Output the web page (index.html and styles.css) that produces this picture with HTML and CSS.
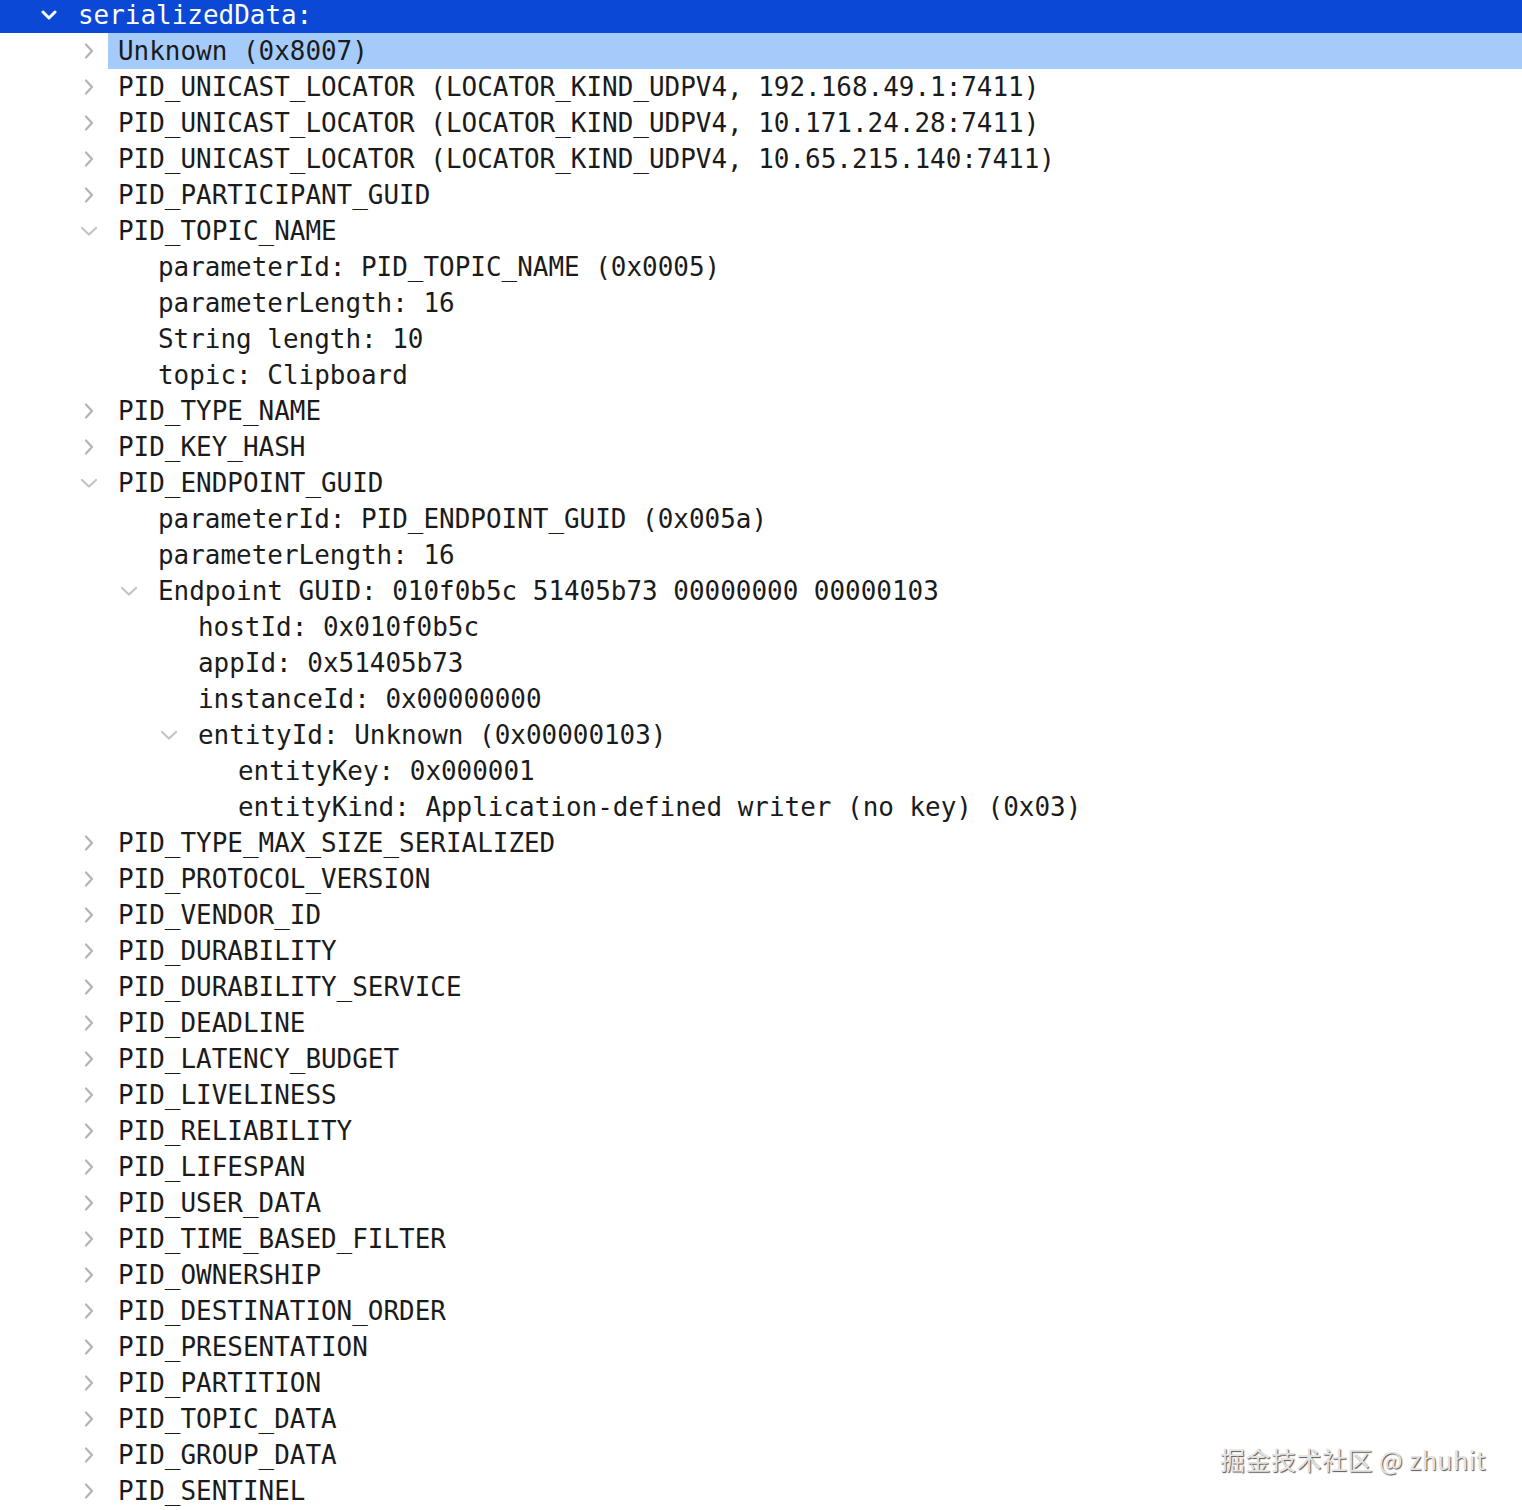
FILE: index.html
```html
<!DOCTYPE html>
<html lang="en">
<head>
    <meta charset="UTF-8">
    <meta name="viewport" content="width=device-width, initial-scale=1.0">
    <title>serializedData</title>
    <link rel="stylesheet" href="styles.css">
</head>
<body>
    <div class="tree">
        <div class="row l0 active">
            <span class="toggle"><svg class="open" width="16" height="10" viewBox="0 0 16 10"><path d="M2 2l6 6 6-6"/></svg></span>
            <span class="label">serializedData:</span>
        </div>
        <div class="row l1 selected">
            <span class="toggle"><svg class="closed" width="10" height="16" viewBox="0 0 10 16"><path d="M2 1.5l6 6.5-6 6.5"/></svg></span>
            <span class="label">Unknown (0x8007)</span>
        </div>
        <div class="row l1">
            <span class="toggle"><svg class="closed" width="10" height="16" viewBox="0 0 10 16"><path d="M2 1.5l6 6.5-6 6.5"/></svg></span>
            <span class="label">PID_UNICAST_LOCATOR (LOCATOR_KIND_UDPV4, 192.168.49.1:7411)</span>
        </div>
        <div class="row l1">
            <span class="toggle"><svg class="closed" width="10" height="16" viewBox="0 0 10 16"><path d="M2 1.5l6 6.5-6 6.5"/></svg></span>
            <span class="label">PID_UNICAST_LOCATOR (LOCATOR_KIND_UDPV4, 10.171.24.28:7411)</span>
        </div>
        <div class="row l1">
            <span class="toggle"><svg class="closed" width="10" height="16" viewBox="0 0 10 16"><path d="M2 1.5l6 6.5-6 6.5"/></svg></span>
            <span class="label">PID_UNICAST_LOCATOR (LOCATOR_KIND_UDPV4, 10.65.215.140:7411)</span>
        </div>
        <div class="row l1">
            <span class="toggle"><svg class="closed" width="10" height="16" viewBox="0 0 10 16"><path d="M2 1.5l6 6.5-6 6.5"/></svg></span>
            <span class="label">PID_PARTICIPANT_GUID</span>
        </div>
        <div class="row l1">
            <span class="toggle"><svg class="open grey" width="18" height="10" viewBox="0 0 18 10"><path d="M2 2l7 6.5 7-6.5"/></svg></span>
            <span class="label">PID_TOPIC_NAME</span>
        </div>
        <div class="row l2"><span class="toggle"></span><span class="label">parameterId: PID_TOPIC_NAME (0x0005)</span></div>
        <div class="row l2"><span class="toggle"></span><span class="label">parameterLength: 16</span></div>
        <div class="row l2"><span class="toggle"></span><span class="label">String length: 10</span></div>
        <div class="row l2"><span class="toggle"></span><span class="label">topic: Clipboard</span></div>
        <div class="row l1">
            <span class="toggle"><svg class="closed" width="10" height="16" viewBox="0 0 10 16"><path d="M2 1.5l6 6.5-6 6.5"/></svg></span>
            <span class="label">PID_TYPE_NAME</span>
        </div>
        <div class="row l1">
            <span class="toggle"><svg class="closed" width="10" height="16" viewBox="0 0 10 16"><path d="M2 1.5l6 6.5-6 6.5"/></svg></span>
            <span class="label">PID_KEY_HASH</span>
        </div>
        <div class="row l1">
            <span class="toggle"><svg class="open grey" width="18" height="10" viewBox="0 0 18 10"><path d="M2 2l7 6.5 7-6.5"/></svg></span>
            <span class="label">PID_ENDPOINT_GUID</span>
        </div>
        <div class="row l2"><span class="toggle"></span><span class="label">parameterId: PID_ENDPOINT_GUID (0x005a)</span></div>
        <div class="row l2"><span class="toggle"></span><span class="label">parameterLength: 16</span></div>
        <div class="row l2">
            <span class="toggle"><svg class="open grey" width="18" height="10" viewBox="0 0 18 10"><path d="M2 2l7 6.5 7-6.5"/></svg></span>
            <span class="label">Endpoint GUID: 010f0b5c 51405b73 00000000 00000103</span>
        </div>
        <div class="row l3"><span class="toggle"></span><span class="label">hostId: 0x010f0b5c</span></div>
        <div class="row l3"><span class="toggle"></span><span class="label">appId: 0x51405b73</span></div>
        <div class="row l3"><span class="toggle"></span><span class="label">instanceId: 0x00000000</span></div>
        <div class="row l3">
            <span class="toggle"><svg class="open grey" width="18" height="10" viewBox="0 0 18 10"><path d="M2 2l7 6.5 7-6.5"/></svg></span>
            <span class="label">entityId: Unknown (0x00000103)</span>
        </div>
        <div class="row l4"><span class="toggle"></span><span class="label">entityKey: 0x000001</span></div>
        <div class="row l4"><span class="toggle"></span><span class="label">entityKind: Application-defined writer (no key) (0x03)</span></div>
        <div class="row l1">
            <span class="toggle"><svg class="closed" width="10" height="16" viewBox="0 0 10 16"><path d="M2 1.5l6 6.5-6 6.5"/></svg></span>
            <span class="label">PID_TYPE_MAX_SIZE_SERIALIZED</span>
        </div>
        <div class="row l1">
            <span class="toggle"><svg class="closed" width="10" height="16" viewBox="0 0 10 16"><path d="M2 1.5l6 6.5-6 6.5"/></svg></span>
            <span class="label">PID_PROTOCOL_VERSION</span>
        </div>
        <div class="row l1">
            <span class="toggle"><svg class="closed" width="10" height="16" viewBox="0 0 10 16"><path d="M2 1.5l6 6.5-6 6.5"/></svg></span>
            <span class="label">PID_VENDOR_ID</span>
        </div>
        <div class="row l1">
            <span class="toggle"><svg class="closed" width="10" height="16" viewBox="0 0 10 16"><path d="M2 1.5l6 6.5-6 6.5"/></svg></span>
            <span class="label">PID_DURABILITY</span>
        </div>
        <div class="row l1">
            <span class="toggle"><svg class="closed" width="10" height="16" viewBox="0 0 10 16"><path d="M2 1.5l6 6.5-6 6.5"/></svg></span>
            <span class="label">PID_DURABILITY_SERVICE</span>
        </div>
        <div class="row l1">
            <span class="toggle"><svg class="closed" width="10" height="16" viewBox="0 0 10 16"><path d="M2 1.5l6 6.5-6 6.5"/></svg></span>
            <span class="label">PID_DEADLINE</span>
        </div>
        <div class="row l1">
            <span class="toggle"><svg class="closed" width="10" height="16" viewBox="0 0 10 16"><path d="M2 1.5l6 6.5-6 6.5"/></svg></span>
            <span class="label">PID_LATENCY_BUDGET</span>
        </div>
        <div class="row l1">
            <span class="toggle"><svg class="closed" width="10" height="16" viewBox="0 0 10 16"><path d="M2 1.5l6 6.5-6 6.5"/></svg></span>
            <span class="label">PID_LIVELINESS</span>
        </div>
        <div class="row l1">
            <span class="toggle"><svg class="closed" width="10" height="16" viewBox="0 0 10 16"><path d="M2 1.5l6 6.5-6 6.5"/></svg></span>
            <span class="label">PID_RELIABILITY</span>
        </div>
        <div class="row l1">
            <span class="toggle"><svg class="closed" width="10" height="16" viewBox="0 0 10 16"><path d="M2 1.5l6 6.5-6 6.5"/></svg></span>
            <span class="label">PID_LIFESPAN</span>
        </div>
        <div class="row l1">
            <span class="toggle"><svg class="closed" width="10" height="16" viewBox="0 0 10 16"><path d="M2 1.5l6 6.5-6 6.5"/></svg></span>
            <span class="label">PID_USER_DATA</span>
        </div>
        <div class="row l1">
            <span class="toggle"><svg class="closed" width="10" height="16" viewBox="0 0 10 16"><path d="M2 1.5l6 6.5-6 6.5"/></svg></span>
            <span class="label">PID_TIME_BASED_FILTER</span>
        </div>
        <div class="row l1">
            <span class="toggle"><svg class="closed" width="10" height="16" viewBox="0 0 10 16"><path d="M2 1.5l6 6.5-6 6.5"/></svg></span>
            <span class="label">PID_OWNERSHIP</span>
        </div>
        <div class="row l1">
            <span class="toggle"><svg class="closed" width="10" height="16" viewBox="0 0 10 16"><path d="M2 1.5l6 6.5-6 6.5"/></svg></span>
            <span class="label">PID_DESTINATION_ORDER</span>
        </div>
        <div class="row l1">
            <span class="toggle"><svg class="closed" width="10" height="16" viewBox="0 0 10 16"><path d="M2 1.5l6 6.5-6 6.5"/></svg></span>
            <span class="label">PID_PRESENTATION</span>
        </div>
        <div class="row l1">
            <span class="toggle"><svg class="closed" width="10" height="16" viewBox="0 0 10 16"><path d="M2 1.5l6 6.5-6 6.5"/></svg></span>
            <span class="label">PID_PARTITION</span>
        </div>
        <div class="row l1">
            <span class="toggle"><svg class="closed" width="10" height="16" viewBox="0 0 10 16"><path d="M2 1.5l6 6.5-6 6.5"/></svg></span>
            <span class="label">PID_TOPIC_DATA</span>
        </div>
        <div class="row l1">
            <span class="toggle"><svg class="closed" width="10" height="16" viewBox="0 0 10 16"><path d="M2 1.5l6 6.5-6 6.5"/></svg></span>
            <span class="label">PID_GROUP_DATA</span>
        </div>
        <div class="row l1">
            <span class="toggle"><svg class="closed" width="10" height="16" viewBox="0 0 10 16"><path d="M2 1.5l6 6.5-6 6.5"/></svg></span>
            <span class="label">PID_SENTINEL</span>
        </div>
    </div>
    <div class="watermark">掘金技术社区 @ zhuhit</div>
</body>
</html>
```

FILE: styles.css
```css
body {
    margin: 0;
    padding: 0;
    background-color: #fff;
    color: #1b1b1b;
    font-family: "DejaVu Sans Mono", "Liberation Mono", monospace;
    font-size: 25.95px;
    overflow: hidden;
}
.tree {
    margin-top: -3px;
}
.row {
    display: flex;
    align-items: center;
    height: 36px;
    white-space: pre;
}
.l0 { padding-left: 38px; }
.l1 { padding-left: 78px; }
.l2 { padding-left: 118px; }
.l3 { padding-left: 158px; }
.l4 { padding-left: 198px; }
.toggle {
    display: flex;
    align-items: center;
    justify-content: center;
    width: 22px;
    margin-right: 18px;
    height: 36px;
}
.toggle svg {
    fill: none;
    stroke-linecap: round;
    stroke-linejoin: round;
}
.toggle .closed {
    stroke: #b4b4b4;
    stroke-width: 2.2;
}
.toggle .open.grey {
    stroke: #c4c4c4;
    stroke-width: 2.2;
}
.active {
    background-color: #0b48d6;
    color: #fff;
}
.active .toggle svg {
    stroke: #fff;
    stroke-width: 3;
}
.selected .label {
    flex: 1;
    align-self: stretch;
    display: flex;
    align-items: center;
    margin-left: -10px;
    padding-left: 10px;
    background-color: #a5cbfa;
}
.label {
    line-height: 36px;
}
.watermark {
    position: absolute;
    right: 36px;
    top: 1441px;
    font-family: "Noto Sans CJK SC", "Noto Sans", sans-serif;
    font-size: 25px;
    color: #e4e4e4;
    text-shadow: 1px 1px 1px #555, -1px -1px 0 #fff;
    letter-spacing: 0.5px;
}
```
